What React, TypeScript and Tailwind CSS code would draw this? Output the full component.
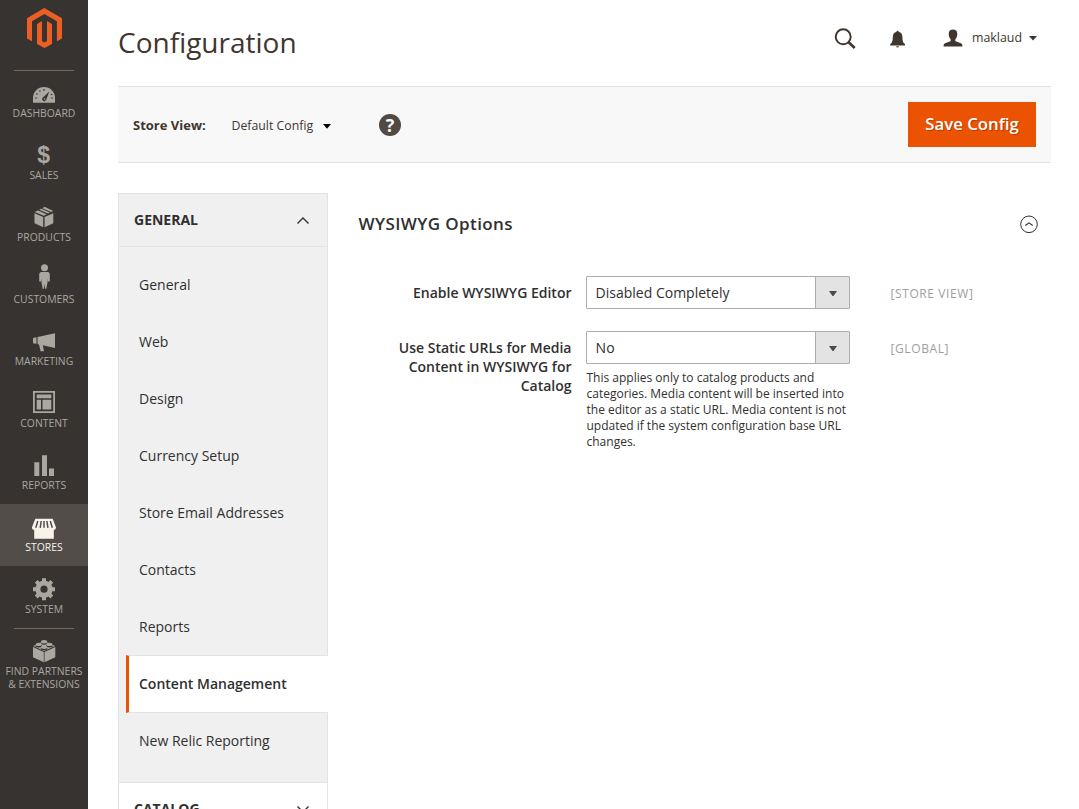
import type { ReactNode } from 'react';

const cube = (
  <>
    <path d="M5.500 10.300 14.200 13.900V24.300L5.500 20.200zM24.300 10.300 15.600 13.900V24.300L24.300 20.200z" />
    <path d="M5.700 9.100 8.900 7.400 17.700 11.200 14.900 12.700zM10.100 6.800 12.100 5.800 20.900 9.600 19 10.600zM13.300 5.200 15.600 3.800 24.200 8.100 22.200 9z" />
  </>
);

const icons: Record<string, ReactNode> = {
  dashboard: (
    <>
      <path d="M4 23.800V19a11 11 0 0 1 22 0v4.800z" />
      <g fill="#373330">
        <circle cx="7" cy="19" r=".8" />
        <circle cx="8" cy="15" r=".8" />
        <circle cx="10.900" cy="12" r=".8" />
        <circle cx="15" cy="10.900" r=".8" />
        <circle cx="22.500" cy="15.500" r=".8" />
        <circle cx="23" cy="19" r=".8" />
        <path d="M20.300 12.500 17.300 20.500A2.100 2.100 0 1 1 14.200 18.300z" />
      </g>
      <circle cx="15.600" cy="20" r=".8" />
    </>
  ),
  sales: (
    <text x="14.600" y="22" textAnchor="middle" fontSize="23" fontWeight="700" fontFamily="Liberation Sans, sans-serif">
      $
    </text>
  ),
  products: cube,
  customers: (
    <>
      <circle cx="15.500" cy="2.700" r="3.500" />
      <path d="M12.500 7h6c1.500 0 2.300 1 2.300 2.500V16.500h-1.800V13L18.500 17.500 17.300 23.700H16.100L15.500 19 14.900 23.700H13.700L12.500 17.500 12 13V16.500H10.200V9.500C10.200 8 11 7 12.500 7z" />
    </>
  ),
  marketing: (
    <path d="M4 11 7.500 10.300V16.800L4 16.200zM8.600 10 26 6.300V21L13.800 18.200 15 24.300H11.600L10 17.500 8.600 17.200z" />
  ),
  content: (
    <>
      <path fillRule="evenodd" d="M4 2H26V24H4zM5.800 3.800V22.200H24.200V3.800z" />
      <path d="M7.700 5.500H22.300V9.200H7.700zM7.700 10.800H12V20.500H7.700zM13.500 10.800H22.300V20.500H13.500z" />
    </>
  ),
  reports: <path d="M5.300 11.200H10.300V25H5.300zM13 4.200H18V25H13zM20 17.500H25V25H20z" />,
  stores: (
    <>
      <path d="M6.300 5.800H23.700L27 14.500C27 16.200 25.500 17 24.800 17V25.700H5.200V17C4.200 17 2.900 16.200 2.900 14.500z" />
      <path
        d="M8.800 8 6.800 14.800M12.200 8 11.200 14.800M15 8V14.800M17.900 8 18.900 14.800M21.300 8 23.300 14.800"
        fill="none"
        stroke="#524d49"
        strokeWidth="1.500"
      />
    </>
  ),
  system: (
    <>
      <circle cx="15" cy="14.200" r="6.100" fill="none" stroke="currentColor" strokeWidth="5" />
      <path
        d="M15 3.200V7M15 21.400V25.200M4 14.200H8M22 14.200H26M7.200 6.400 10 9.200M20 19.200 22.800 22M7.200 22 10 19.200M20 9.200 22.800 6.400"
        stroke="currentColor"
        strokeWidth="4"
      />
    </>
  ),
  partners: (
    <>
      <path d="M4 9.900 14.800 15V25.200L4 20.200zM26.300 9.900 15.500 15V25.200L26.300 20.200z" />
      <path d="M4.200 8.900 15.100 3.800 26.100 8.900 15.100 14.100z" />
      <g fill="#373330">
        <ellipse cx="15.100" cy="6" rx="3.300" ry="1.700" />
        <ellipse cx="9.800" cy="8.700" rx="3.300" ry="1.700" />
        <ellipse cx="20.400" cy="8.700" rx="3.300" ry="1.700" />
        <ellipse cx="15.100" cy="11.600" rx="3.300" ry="1.700" />
      </g>
      <ellipse cx="15.100" cy="4.700" rx="3.100" ry="1.700" />
      <ellipse cx="9.800" cy="7.400" rx="3.100" ry="1.700" />
      <ellipse cx="20.400" cy="7.400" rx="3.100" ry="1.700" />
      <ellipse cx="15.100" cy="10.300" rx="3.100" ry="1.700" />
    </>
  ),
};

const menu = [
  ['dashboard', 'DASHBOARD'],
  ['sales', 'SALES'],
  ['products', 'PRODUCTS'],
  ['customers', 'CUSTOMERS'],
  ['marketing', 'MARKETING'],
  ['content', 'CONTENT'],
  ['reports', 'REPORTS'],
  ['stores', 'STORES'],
  ['system', 'SYSTEM'],
  ['partners', 'FIND PARTNERS & EXTENSIONS'],
];

const sections = [
  'General',
  'Web',
  'Design',
  'Currency Setup',
  'Store Email Addresses',
  'Contacts',
  'Reports',
  'Content Management',
  'New Relic Reporting',
];

function Sidebar() {
  return (
    <aside className="h-[809px] w-[88px] shrink-0 bg-[#373330]">
      <div className="flex h-[70px] justify-center pt-2">
        <svg className="h-10 w-9" viewBox="0 0 36 40" fill="#eb5f24">
          <path d="M18.300 0 36 10.200V30.500L30.900 33.300V13.200L18.400 5.900 6 13.200V33.300L1 30.500V10.200z" />
          <path d="M11 15.900 16 13V33L18.500 34.400 21 33V13L26 15.900V35.900L18.500 40 11 35.900z" />
        </svg>
      </div>
      <nav>
        {menu.map(([id, label]) => (
          <div key={id} className={id === 'stores' ? 'h-[62px] bg-[#524d49] text-[#f7f3eb]' : 'h-[62px] text-[#aaa6a0]'}>
            <div
              className={
                id === 'dashboard' || id === 'partners'
                  ? 'mx-auto h-px w-[60px] bg-[#736963]'
                  : 'mx-auto h-px w-[60px]'
              }
            />
            <svg className="mx-auto mt-2 block size-[30px] overflow-visible" viewBox="0 0 30 30" fill="currentColor">
              {icons[id]}
            </svg>
            <div className="-mx-1 -mt-[2px] px-[5px] text-center text-[10.4px] leading-[13px]">{label}</div>
          </div>
        ))}
      </nav>
    </aside>
  );
}

function Header() {
  return (
    <header className="flex h-[86px] items-start justify-between">
      <h1 className="pt-[23px] text-[28px] leading-[38px] text-[#41362f]">Configuration</h1>
      <div className="flex h-[76px] items-center pr-[14px] text-[#41362f]">
        <svg className="mt-[2px] h-[22px] w-[22px]" viewBox="0 0 22 22" fill="none" stroke="currentColor">
          <circle cx="9.200" cy="8.800" r="7.500" strokeWidth="1.900" />
          <path d="m14.400 14 6.300 6" strokeWidth="2.600" />
        </svg>
        <svg className="ml-[34px] mt-[2px] h-[18px] w-4" viewBox="0 0 16 18" fill="currentColor">
          <path d="M6.600 1.800C6.600 1 7 .7 7.600.7s1 .3 1 1.100c2.600.6 3.800 2.500 3.800 5.400 0 3.900.8 5.900 2.600 6.900v1.300H.2v-1.300C2 13.100 2.800 11.100 2.800 7.200c0-2.900 1.200-4.800 3.800-5.400zM6.100 16.200h3c-.2.800-.8 1.200-1.500 1.200s-1.300-.4-1.500-1.200z" />
        </svg>
        <svg className="-mt-px ml-[37px] h-[18px] w-5" viewBox="0 0 20 18" fill="currentColor">
          <path d="M5.700 4.800C5.700 1.900 7.300.4 10 .4s4.300 1.500 4.300 4.400c0 2.300-.8 4.300-2 5.400v1.300c0 .7.400.9 1 1.100l4 1.300c1.500.5 2.100 1.200 2.100 2.500v1H.6v-1c0-1.300.6-2 2.100-2.500l4-1.300c.6-.2 1-.4 1-1.100v-1.300c-1.200-1.100-2-3.100-2-5.400z" />
        </svg>
        <span className="ml-[9px] text-[12.4px] leading-4">maklaud</span>
        <svg className="ml-[7px] mt-px h-[5px] w-2" viewBox="0 0 8 5" fill="currentColor">
          <path d="M0 0h8L4 4.600z" />
        </svg>
      </div>
    </header>
  );
}

function ActionBar() {
  return (
    <div className="flex h-[77px] items-center border-y border-[#e3e3e3] bg-[#f8f8f8] px-[15px] text-[#41362f]">
      <span className="mt-[2px] w-[73px] whitespace-nowrap text-[13px] font-bold">Store View:</span>
      <span className="mt-[3px] ml-[25.500px] w-[82.500px] text-[12.300px] whitespace-nowrap">Default Config</span>
      <svg className="mt-[3px] ml-[9px] h-[5px] w-2" viewBox="0 0 8 5" fill="#000">
        <path d="M0 0h8L4 4.800z" />
      </svg>
      <div className="mt-px ml-12 flex size-[22px] items-center justify-center rounded-full bg-[#514943] text-[18px] leading-none font-bold text-[#f8f8f8]">
        ?
      </div>
      <button className="ml-auto h-[45px] w-32 bg-[#eb5202] pb-[2px] text-[16.800px] font-semibold text-white [text-shadow:1px_1px_0_rgba(0,0,0,0.25)]">
        Save Config
      </button>
    </div>
  );
}

function SettingsNav() {
  return (
    <nav className="h-[616px] w-[210px] shrink-0 overflow-hidden text-[#303030]">
      <div className="flex h-[54px] items-center justify-between border border-[#e3e3e3] bg-[#f0f0f0] pl-[15px] pr-[18px]">
        <span className="-mt-[2px] text-[14px] font-bold">GENERAL</span>
        <svg className="h-[7px] w-3" viewBox="0 0 12 7" fill="none" stroke="currentColor" strokeWidth="1.400">
          <path d="m.5 6.500 5.500-5.500 5.500 5.500" />
        </svg>
      </div>
      <ul className="h-[535px] border-x border-[#e3e3e3] bg-[#f0f0f0] pt-[9px]">
        {sections.map((name) =>
          name === 'Content Management' ? (
            <li
              key={name}
              className="relative -mr-px -mb-px ml-[7px] flex h-[58px] items-center border-y border-l-[3px] border-[#e3e3e3] border-l-[#eb5202] bg-white pb-[2px] pl-[10px] text-[14px] font-semibold"
            >
              {name}
            </li>
          ) : (
            <li key={name} className="flex h-[57px] items-center pl-5 text-[14px]">
              {name}
            </li>
          ),
        )}
      </ul>
      <div className="flex h-[54px] items-center justify-between border border-[#e3e3e3] bg-white pl-[15px] pr-[18px]">
        <span className="-mt-[2px] text-[14px] font-bold">CATALOG</span>
        <svg className="h-[7px] w-3" viewBox="0 0 12 7" fill="none" stroke="currentColor" strokeWidth="1.400">
          <path d="m.5.5 5.500 5.500 5.500-5.500" />
        </svg>
      </div>
    </nav>
  );
}

function Select({ value }: { value: string }) {
  return (
    <div className="flex h-[33px] w-[264px] rounded-[1px] border border-[#adadad] bg-white">
      <span className="flex-1 pl-[8.600px] text-[14px] leading-[31px]">{value}</span>
      <span className="flex w-[34px] items-center justify-center border-l border-[#adadad] bg-[#e3e3e3]">
        <svg className="mt-px h-[5px] w-2" viewBox="0 0 8 5" fill="#514943">
          <path d="M0 0h8L4.500 5h-1z" />
        </svg>
      </span>
    </div>
  );
}

function Options() {
  return (
    <section className="ml-[31px] flex-1 text-[#303030]">
      <div className="flex h-[62px] items-center justify-between pr-[13px]">
        <h2 className="-ml-[0.5px] text-[17px] font-semibold tracking-[0.4px]">WYSIWYG Options</h2>
        <svg className="h-[18px] w-[18px]" viewBox="0 0 18 18" fill="none" stroke="currentColor">
          <circle cx="9" cy="9.300" r="8.300" strokeWidth="1" />
          <path d="M5.300 10.500 9 7.900l3.700 2.600" strokeWidth="1.100" />
        </svg>
      </div>
      <div className="mt-[21px] flex h-[55px]">
        <label className="w-[213px] pt-[7px] pr-[0.5px] text-right text-[14px] leading-[19px] font-semibold">
          Enable WYSIWYG Editor
        </label>
        <div className="ml-[14px] w-[264px]">
          <Select value="Disabled Completely" />
        </div>
        <span className="ml-[40.500px] pt-[9px] text-[12px] leading-[17px] tracking-[0.6px] text-[#9e9e9e]">[STORE VIEW]</span>
      </div>
      <div className="flex">
        <label className="w-[213px] pt-[7px] pr-[0.5px] pl-7 text-right text-[14px] leading-[19px] font-semibold">
          Use Static URLs for Media Content in WYSIWYG for Catalog
        </label>
        <div className="ml-[14px] w-[264px]">
          <Select value="No" />
          <p className="mt-[6px] pl-[0.5px] text-[12px] leading-4 whitespace-nowrap">
            This applies only to catalog products and
            <br />
            categories. Media content will be inserted into
            <br />
            the editor as a static URL. Media content is not
            <br />
            updated if the system configuration base URL
            <br />
            changes.
          </p>
        </div>
        <span className="ml-[40.500px] pt-[9px] text-[12px] leading-[17px] tracking-[0.6px] text-[#9e9e9e]">[GLOBAL]</span>
      </div>
    </section>
  );
}

export default function App() {
  return (
    <div className="flex h-[809px] w-[1079px] overflow-hidden bg-white font-['Open_Sans',sans-serif]">
      <Sidebar />
      <main className="ml-[30px] w-[933px]">
        <Header />
        <ActionBar />
        <div className="mt-[30px] flex items-start">
          <SettingsNav />
          <Options />
        </div>
      </main>
    </div>
  );
}
